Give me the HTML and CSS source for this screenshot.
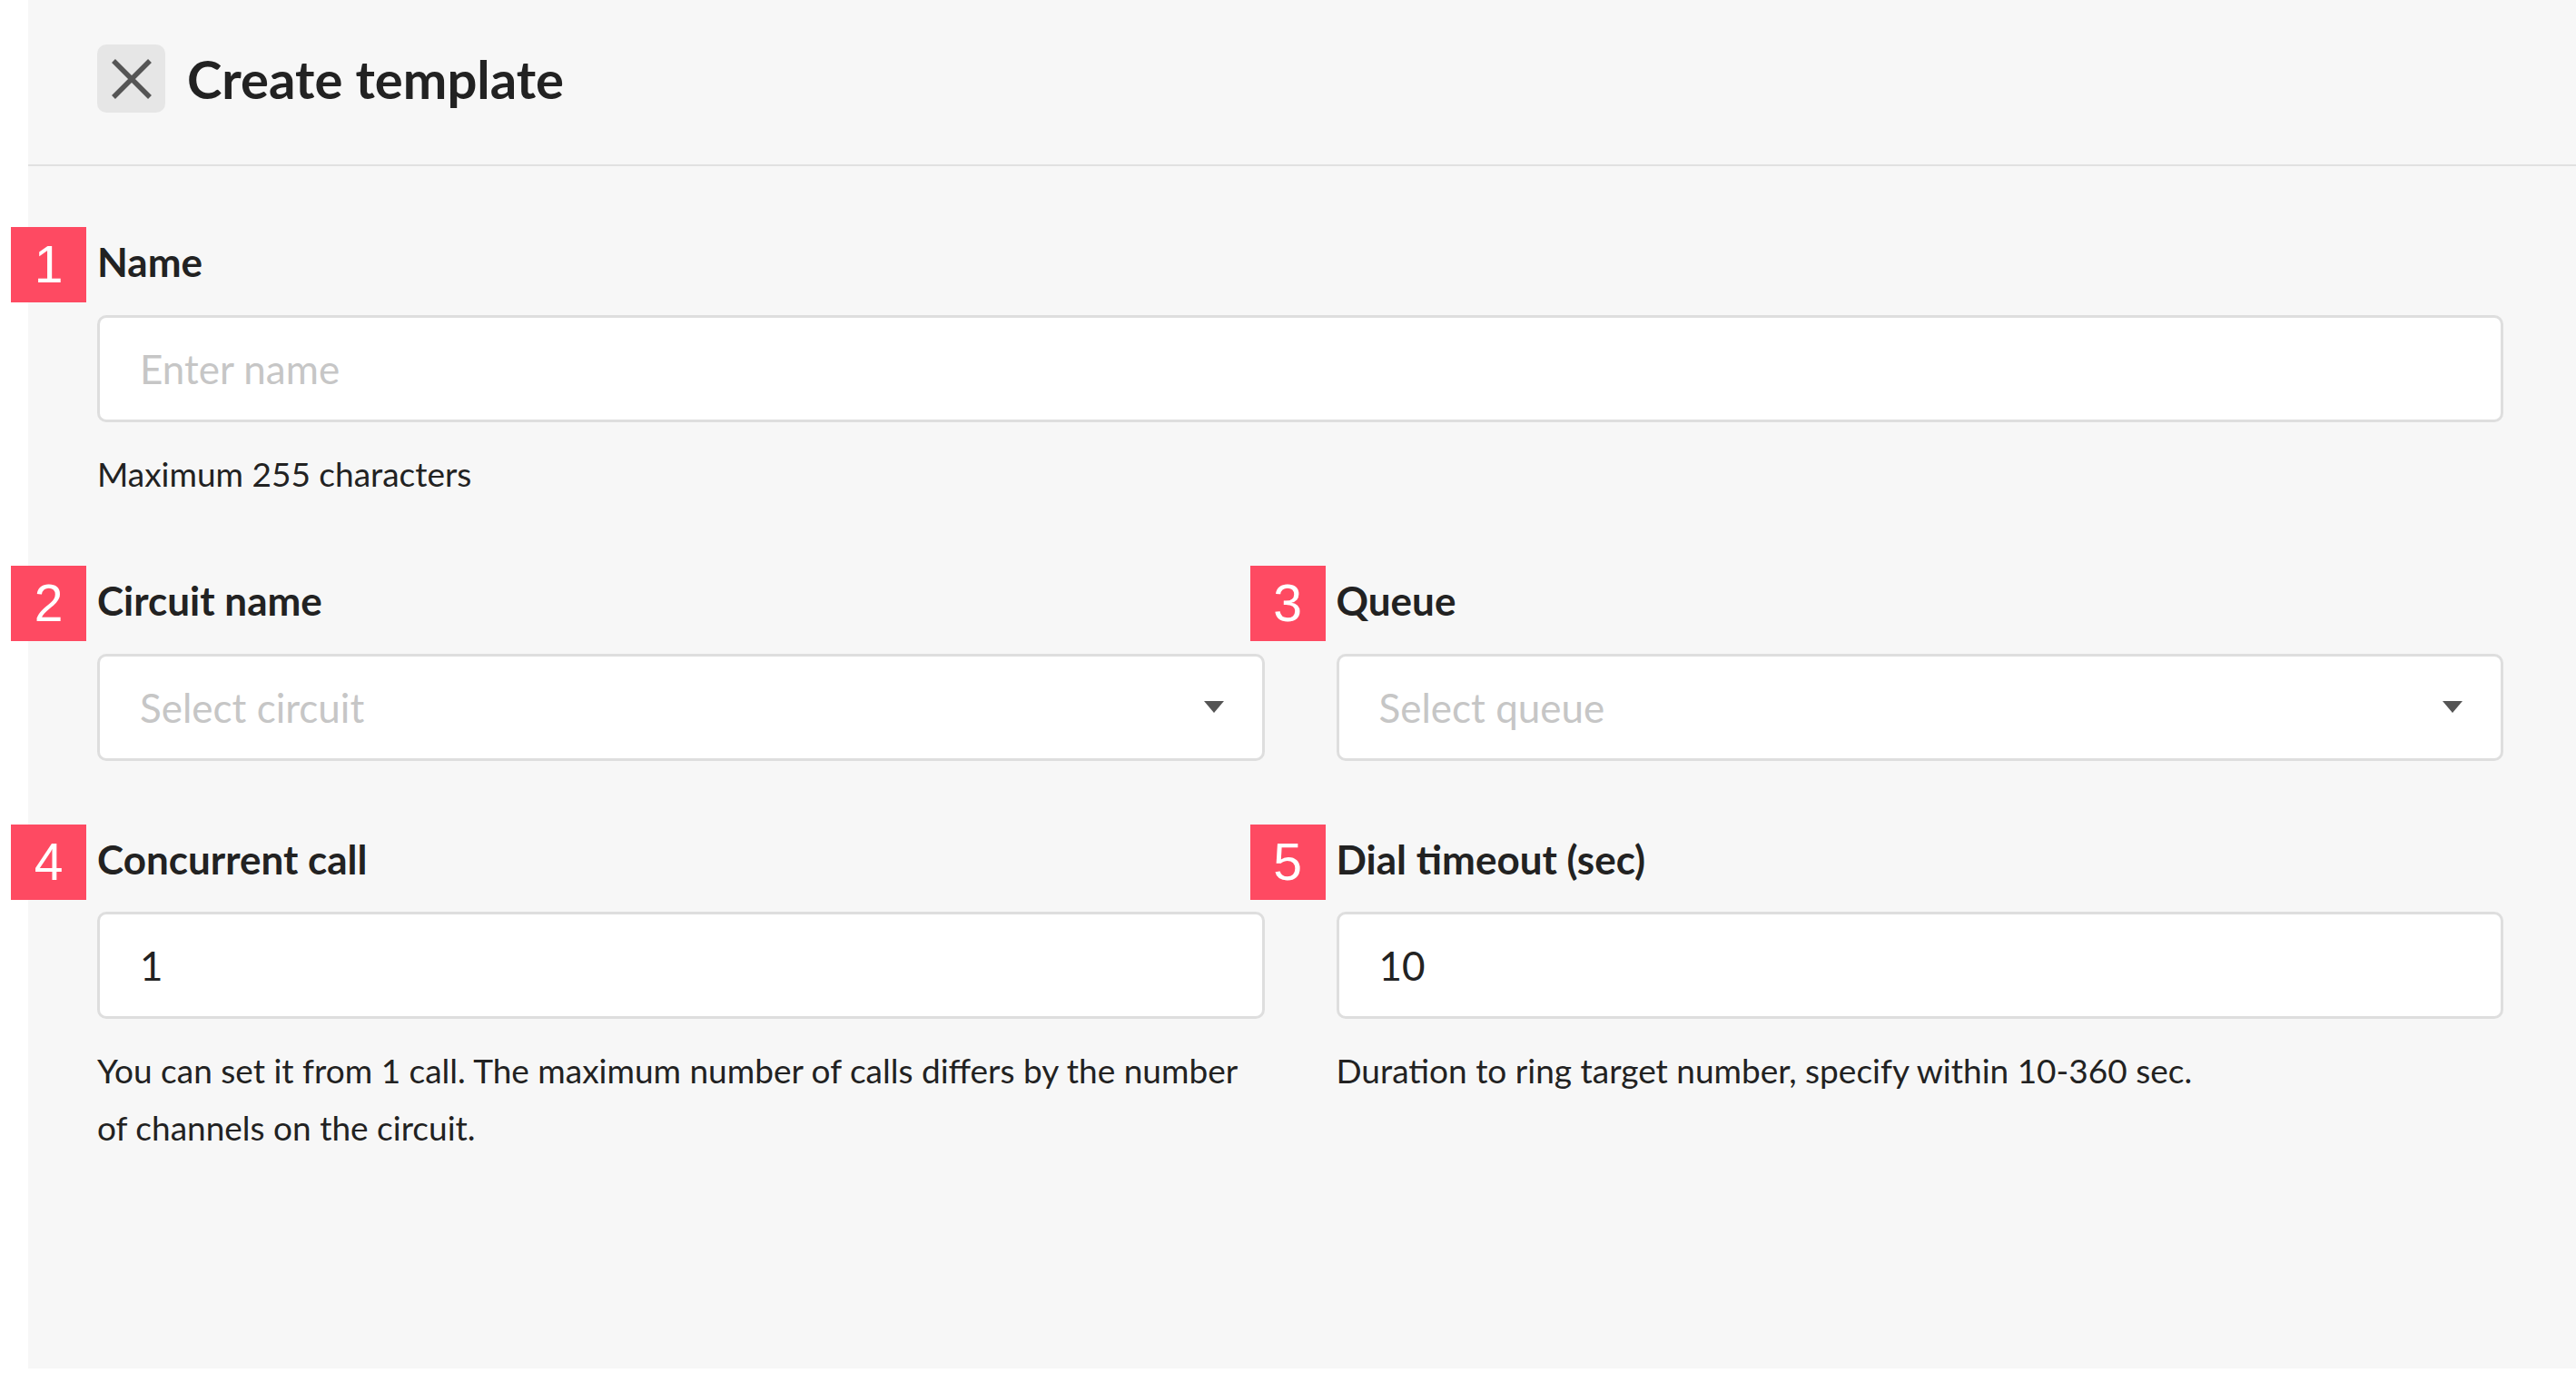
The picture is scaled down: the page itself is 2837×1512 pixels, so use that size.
FILE: index.html
```html
<!DOCTYPE html>
<html lang="en">
<head>
  <meta charset="UTF-8">
  <meta name="viewport" content="width=device-width, initial-scale=1.0">
  <title>Create template</title>
  <link rel="stylesheet" href="styles.css">
</head>
<body>
  <div class="panel">
    <!-- header -->
    <header class="top-bar">
      <button class="close-btn" type="button" aria-label="Close">
        <svg class="close-icon" viewBox="0 0 44 44">
          <path d="M2 2 L42 42 M42 2 L2 42" />
        </svg>
      </button>
      <h1 class="page-title">Create template</h1>
    </header>

    <!-- form -->
    <main class="form">
      <div class="field">
        <label class="field-label"><span class="step">1</span>Name</label>
        <input class="text-input" type="text" placeholder="Enter name">
        <p class="field-help">Maximum 255 characters</p>
      </div>

      <div class="field-row">
        <div class="field">
          <label class="field-label"><span class="step">2</span>Circuit name</label>
          <div class="select">
            <span class="select-placeholder">Select circuit</span>
            <svg class="select-caret" viewBox="0 0 22 13"><path d="M0 0 H22 L11 13 Z" /></svg>
          </div>
        </div>
        <div class="field">
          <label class="field-label"><span class="step">3</span>Queue</label>
          <div class="select">
            <span class="select-placeholder">Select queue</span>
            <svg class="select-caret" viewBox="0 0 22 13"><path d="M0 0 H22 L11 13 Z" /></svg>
          </div>
        </div>
      </div>

      <div class="field-row">
        <div class="field">
          <label class="field-label"><span class="step">4</span>Concurrent call</label>
          <input class="text-input" type="text" value="1">
          <p class="field-help">You can set it from 1 call. The maximum number of calls differs by the number of channels on the circuit.</p>
        </div>
        <div class="field">
          <label class="field-label"><span class="step">5</span>Dial timeout (sec)</label>
          <input class="text-input" type="text" value="10">
          <p class="field-help">Duration to ring target number, specify within 10-360 sec.</p>
        </div>
      </div>
    </main>
  </div>
</body>
</html>
```

FILE: styles.css
```css
* {
  margin: 0;
  padding: 0;
  box-sizing: border-box;
}

body {
  font-family: Lato, 'Noto Sans', sans-serif;
  background: #fff;
  color: #222;
}

.panel {
  margin-left: 31px;
  height: 1507px;
  background: #f7f7f7;
}

/* header */
.top-bar {
  display: flex;
  align-items: center;
  gap: 24px;
  padding: 49px 0 57px 76px;
  border-bottom: 2px solid #e1e1e1;
}

.close-btn {
  width: 75px;
  height: 75px;
  border: none;
  border-radius: 10px;
  background: #e6e6e6;
  display: flex;
  align-items: center;
  justify-content: center;
}

.close-icon {
  width: 44px;
  height: 44px;
  stroke: #555;
  stroke-width: 5.5;
  fill: none;
}

.page-title {
  font-size: 58px;
  font-weight: 700;
  line-height: 1.2;
  color: #222;
}

/* form */
.form {
  padding: 78px 80px 0 76px;
  display: flex;
  flex-direction: column;
  gap: 81px;
}

.field-row {
  display: grid;
  grid-template-columns: 1fr 1fr;
  gap: 79px;
}

.field-label {
  position: relative;
  display: block;
  font-size: 44px;
  font-weight: 700;
  line-height: 1.2;
  padding-top: 1px;
  margin-bottom: 32px;
}

.step {
  position: absolute;
  left: -95px;
  top: -11px;
  width: 83px;
  height: 83px;
  background: #fe4a62;
  color: #fff;
  font-family: 'Liberation Sans', Arial, sans-serif;
  font-weight: 400;
  font-size: 57px;
  line-height: 1;
  display: flex;
  align-items: center;
  justify-content: center;
}

.text-input,
.select {
  display: block;
  width: 100%;
  height: 118px;
  border: 3px solid #dedede;
  border-radius: 10px;
  background: #fff;
  padding: 0 44px;
  font-family: inherit;
  font-size: 44px;
  color: #222;
  outline: none;
}

.text-input::placeholder {
  color: #c6c6c6;
}

.select {
  display: flex;
  align-items: center;
  justify-content: space-between;
  padding-right: 42px;
}

.select-placeholder {
  color: #c6c6c6;
}

.select-caret {
  width: 22px;
  height: 13px;
  fill: #555;
}

.field-help {
  margin-top: 25px;
  font-size: 37px;
  line-height: 63px;
  color: #222;
}
```
